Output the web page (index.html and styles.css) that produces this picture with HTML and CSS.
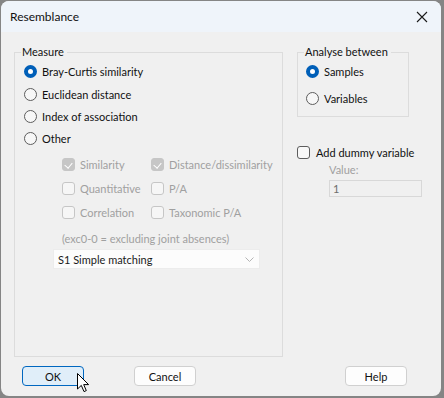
FILE: index.html
```html
<!DOCTYPE html>
<html lang="en">
<head>
  <meta charset="UTF-8">
  <title>Resemblance</title>
  <link rel="stylesheet" href="styles.css">
</head>
<body>
  <div class="window">
    <div class="titlebar">
      <span>Resemblance</span>
      <svg class="close" width="12" height="12" viewBox="0 0 12 12">
        <path d="M1 1 L11 11 M11 1 L1 11" stroke="#1a1a1a" stroke-width="1.1" fill="none"/>
      </svg>
    </div>

    <div class="content">
      <fieldset class="group measure">
        <legend>Measure</legend>
        <div class="radios">
          <label class="radio"><span class="dot on"></span>Bray-Curtis similarity</label>
          <label class="radio"><span class="dot"></span>Euclidean distance</label>
          <label class="radio"><span class="dot"></span>Index of association</label>
          <label class="radio"><span class="dot"></span>Other</label>
        </div>
        <div class="options">
          <label class="check disabled"><span class="box ticked"></span>Similarity</label>
          <label class="check disabled"><span class="box ticked"></span>Distance/dissimilarity</label>
          <label class="check disabled"><span class="box"></span>Quantitative</label>
          <label class="check disabled"><span class="box"></span>P/A</label>
          <label class="check disabled"><span class="box"></span>Correlation</label>
          <label class="check disabled"><span class="box"></span>Taxonomic P/A</label>
        </div>
        <p class="note">(exc0-0 = excluding joint absences)</p>
        <div class="combo">
          <span>S1 Simple matching</span>
          <svg width="9" height="5" viewBox="0 0 9 5">
            <path d="M0.5 0.5 L4.5 4.5 L8.5 0.5" stroke="#b4b4b4" fill="none"/>
          </svg>
        </div>
      </fieldset>

      <div class="side">
        <fieldset class="group analyse">
          <legend>Analyse between</legend>
          <div class="radios">
            <label class="radio"><span class="dot on"></span>Samples</label>
            <label class="radio"><span class="dot"></span>Variables</label>
          </div>
        </fieldset>
        <label class="check dummy"><span class="box"></span>Add dummy variable</label>
        <div class="value">
          <span class="value-label">Value:</span>
          <div class="field">1</div>
        </div>
      </div>
    </div>

    <div class="buttons">
      <button class="btn ok">OK</button>
      <button class="btn">Cancel</button>
      <button class="btn help">Help</button>
    </div>

    <svg class="cursor" width="13" height="20" viewBox="0 0 13 20">
      <path d="M0.5 0.5 L0.5 16 L4.3 12.4 L7 18.6 L9.3 17.6 L6.7 11.6 L11.6 11.6 Z" fill="#fff" stroke="#000" stroke-width="1" stroke-linejoin="round"/>
    </svg>
  </div>
</body>
</html>
```

FILE: styles.css
```css
body {
  margin: 0;
  background-color: #858585;
  font-family: Lato, "Noto Sans", sans-serif;
  font-size: 11px;
  color: #111;
}
.window {
  position: relative;
  margin: 1px 0 0 1px;
  width: 440px;
  height: 395px;
  background-color: #f0f0f0;
  border-radius: 8px;
  overflow: hidden;
}
.titlebar {
  height: 31px;
  background-color: #eff4fa;
  display: flex;
  align-items: center;
  justify-content: space-between;
  padding: 0 13px 0 9px;
  font-size: 12px;
}
.close {
  margin-top: 1px;
}
.content {
  display: flex;
  padding: 12px 0 0 13px;
  height: 313px;
}
.group {
  margin: 0;
  min-width: 0;
  border: 1px solid #dcdcdc;
  box-sizing: border-box;
}
.group legend {
  line-height: 16px;
  padding: 0 3px 0 1px;
}
.measure {
  width: 269px;
  height: 313px;
  padding: 1px 0 0 9px;
}
.measure legend {
  margin-left: -3px;
}
.radios {
  display: flex;
  flex-direction: column;
}
.radio, .check {
  display: flex;
  align-items: center;
  height: 22px;
  white-space: nowrap;
}
.radio:first-child {
  height: 21px;
  margin-bottom: 1px;
}
.dot {
  width: 13px;
  height: 13px;
  box-sizing: border-box;
  border: 1px solid #5d5d5d;
  border-radius: 50%;
  background-color: #f7f7f7;
  margin-right: 5px;
  flex-shrink: 0;
}
.dot.on {
  border: 4px solid #005fb8;
  background-color: #fff;
}
.options {
  display: grid;
  grid-template-columns: 89px auto;
  grid-auto-rows: 24px;
  margin: 3px 0 0 38px;
}
.check {
  height: 24px;
}
.box {
  width: 13px;
  height: 13px;
  box-sizing: border-box;
  border: 1px solid #5d5d5d;
  border-radius: 3px;
  background-color: #f8f8f8;
  margin-right: 5px;
  flex-shrink: 0;
  position: relative;
}
.disabled {
  color: #a0a0a0;
}
.disabled .box {
  border-color: #c6c6c6;
  background-color: #f6f6f6;
}
.disabled .box.ticked {
  border-color: #c6c6c6;
  background-color: #c6c6c6;
}
.box.ticked::after {
  content: "";
  position: absolute;
  left: 3px;
  top: 2px;
  width: 4px;
  height: 6px;
  border: solid #fff;
  border-width: 0 1px 1px 0;
  transform: rotate(40deg);
}
.note {
  margin: 7px 0 0 38px;
  line-height: 16px;
  color: #a0a0a0;
}
.combo {
  display: flex;
  align-items: center;
  justify-content: space-between;
  width: 207px;
  height: 20px;
  box-sizing: border-box;
  margin: 2px 0 0 29px;
  padding: 0 5px 0 4px;
  background-color: #fcfcfc;
  border: 1px solid #ececec;
  color: #1a1a1a;
}
.side {
  margin-left: 14px;
  display: flex;
  flex-direction: column;
}
.analyse {
  width: 112px;
  height: 73px;
  padding: 1px 0 0 8px;
}
.analyse legend {
  margin-left: -2px;
}
.analyse .radios {
  gap: 4px;
}
.check.dummy {
  height: 20px;
  margin-top: 25px;
}
.dummy .box {
  margin-right: 6px;
}
.value {
  display: flex;
  flex-direction: column;
  margin-left: 32px;
}
.value-label {
  line-height: 16px;
  color: #a0a0a0;
}
.field {
  margin-top: 2px;
  width: 93px;
  height: 17px;
  box-sizing: border-box;
  border: 1px solid #d8d8d8;
  padding: 0 3px;
  line-height: 15px;
  color: #6d6d6d;
}
.buttons {
  display: flex;
  gap: 50px;
  padding: 9px 34px 0 21px;
}
.btn {
  width: 62px;
  height: 20px;
  padding: 0;
  font-family: inherit;
  font-size: 11px;
  color: #111;
  background-color: #fdfdfd;
  border: 1px solid #d0d0d0;
  border-radius: 4px;
}
.btn.ok {
  background-color: #e0eef9;
  border-color: #0067c0;
}
.btn.help {
  margin-left: auto;
}
.cursor {
  position: absolute;
  left: 76px;
  top: 372px;
}
```
